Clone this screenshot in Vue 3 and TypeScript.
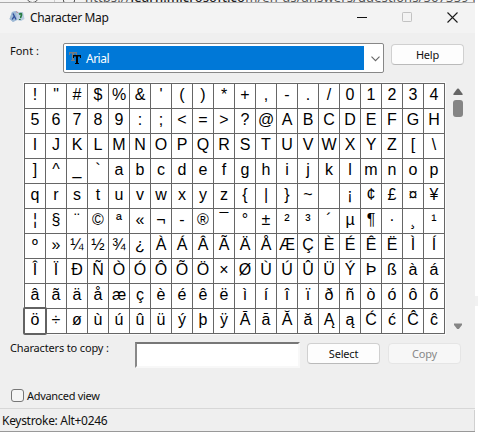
<template>
  <div class="screen">
    <div class="browser-strip">
      <span class="browser-ring"></span>
      <span class="browser-divider"></span>
      <span class="browser-lock"></span>
      <span class="browser-url">https://<b>learn.microsoft.co</b>m/en-us/answers/questions/5673594/</span>
    </div>

    <div class="window">
      <header class="titlebar">
        <svg class="app-icon" width="16" height="14" viewBox="0 0 16 14">
          <path d="M3 2L7 1L10 2L14 2L15.5 9L12 11L8 10L4 12L0.5 9Z" fill="#b9cde0" />
          <path d="M3 2L7 1L8 10L4 12L0.5 9Z" fill="#9eb9d5" />
          <path d="M4 3.5L7 9.5M5.3 6L3.2 9.5" stroke="#304f9b" stroke-width="1.4" fill="none" />
          <path d="M10 4.3Q13 2.5 12.5 5T11 7.5M10.8 9V10" stroke="#287d42" stroke-width="1.7" fill="none" />
          <path d="M7.5 1.5L8.5 3" stroke="#b86f82" />
        </svg>
        <h1 class="title">Character Map</h1>
        <div class="window-controls">
          <svg width="10" height="10" viewBox="0 0 10 10"><path d="M0 5.5H10" stroke="#111" /></svg>
          <svg class="maximize" width="10" height="10" viewBox="0 0 10 10">
            <rect x="0.5" y="0.5" width="9" height="9" rx="0.7" fill="none" stroke="#c2c2c2" />
          </svg>
          <svg width="11" height="11" viewBox="0 0 11 11">
            <path d="M0.5 0.5L10.5 10.5M10.5 0.5L0.5 10.5" stroke="#1a1a1a" stroke-width="1.1" />
          </svg>
        </div>
      </header>

      <div class="font-row">
        <label class="label font-label">Font :</label>
        <div class="combo">
          <div class="combo-value">
            <svg width="13" height="13" viewBox="0 0 13 13">
              <path d="M0 0H8V3H7V1.5H5V8H6V9H2V8H3V1.5H1V3H0Z" fill="#777b80" />
              <path d="M4 3H12V6H11V4.5H9V11H10V12H6V11H7V4.5H5V6H4Z" fill="#050505" />
            </svg>
            <span>Arial</span>
          </div>
          <svg class="chevron" width="9" height="6" viewBox="0 0 9 6">
            <path d="M0.5 0.7L4.5 4.7L8.5 0.7" fill="none" stroke="#666" stroke-width="1.1" />
          </svg>
        </div>
        <button class="button help">Help</button>
      </div>

      <div class="map-row">
        <div class="grid">
          <div
            v-for="(char, index) in characters"
            :key="index"
            :class="['cell', { selected: index === selectedIndex }]"
            @click="selectedIndex = index"
          >{{ char }}</div>
        </div>
        <div class="scrollbar">
          <svg width="10" height="8" viewBox="0 0 10 8"><path d="M4.2 0.8Q5 0 5.8 0.8L9.7 6Q10 7 9 7H1Q0 7 0.3 6Z" fill="#666" /></svg>
          <div class="thumb"></div>
          <svg class="arrow-down" width="8" height="7" viewBox="0 0 8 7"><path d="M0 0.5H8V2L4.8 6H3.2L0 2Z" fill="#858585" /></svg>
        </div>
      </div>

      <div class="copy-row">
        <label class="label copy-label">Characters to copy :</label>
        <input v-model="copyText" class="copy-input" type="text" />
        <button class="button select" @click="selectCharacter">Select</button>
        <button class="button copy" :disabled="!copyText">Copy</button>
      </div>

      <label class="advanced">
        <input v-model="advanced" type="checkbox" />
        <span>Advanced view</span>
      </label>

      <footer class="statusbar"><span>{{ keystroke }}</span></footer>
    </div>
    <div class="outside"><span></span></div>
  </div>
</template>

<script setup lang="ts">
import { computed, ref } from 'vue'

const codes: number[] = []
for (let code = 0x21; code <= 0x109; code++) {
  if (code < 0x7f || code > 0x9f) codes.push(code)
}

// A soft hyphen has no visible glyph of its own
const characters = codes.map((code) => (code === 0xad ? '-' : String.fromCharCode(code)))

const selectedIndex = ref(180)
const copyText = ref('')
const advanced = ref(false)

const keystroke = computed(() => {
  const code = codes[selectedIndex.value]
  return code >= 0xa0 && code <= 0xff ? `Keystroke: Alt+0${code}` : ''
})

const selectCharacter = () => {
  copyText.value += characters[selectedIndex.value]
}
</script>

<style>
body {
  margin: 0;
  background: #fff;
}
</style>

<style scoped>
.screen {
  box-sizing: border-box;
  position: relative;
  display: grid;
  grid-template-columns: 475px 3px;
  grid-template-rows: 3px 429px;
  width: 478px;
  height: 432px;
  overflow: hidden;
  background: #fff;
  color: #111;
  font-family: "Noto Sans", "Open Sans", sans-serif;
  font-size: 11px;
}

.browser-strip {
  position: relative;
  overflow: hidden;
  box-sizing: border-box;
  border-bottom: 1px solid #ababab;
  background: #f3f3f3;
}

.browser-ring,
.browser-lock,
.browser-divider,
.browser-url {
  position: absolute;
}

.browser-ring {
  box-sizing: border-box;
  left: 26px;
  top: -10px;
  width: 13px;
  height: 13px;
  border: 1px solid #555;
  border-radius: 50%;
}

.browser-divider {
  left: 54px;
  width: 1px;
  height: 3px;
  background: #ccc;
}

.browser-lock {
  box-sizing: border-box;
  left: 63px;
  top: -7px;
  width: 12px;
  height: 10px;
  border: 1px solid #555;
  border-radius: 2px;
}

.browser-url {
  left: 85px;
  top: -12px;
  color: #555;
  font-size: 13px;
  line-height: 18px;
  letter-spacing: 0.1px;
  white-space: nowrap;
}

.browser-url b {
  color: #222;
  font-weight: 500;
}

.window {
  display: flex;
  flex-direction: column;
  box-sizing: border-box;
  border-bottom: 1px solid #999;
  background: #efefef;
}

.titlebar {
  display: flex;
  align-items: center;
  box-sizing: border-box;
  flex: 0 0 30px;
  padding: 0 17px 0 9px;
  background: #f3f3f3;
}

.app-icon {
  margin-top: -2px;
}

.title {
  margin: 0 0 0 5px;
  font-size: 12px;
  font-weight: 400;
  line-height: 18px;
  letter-spacing: -0.36px;
}

.window-controls {
  display: flex;
  align-items: center;
  gap: 35px;
  margin: -2px 0 0 auto;
}

.font-row {
  display: flex;
  align-items: flex-start;
  flex: 0 0 49px;
  box-sizing: border-box;
  padding: 10px 11px 0 10px;
}

.label {
  line-height: 16px;
  white-space: nowrap;
}

.font-label {
  width: 53px;
}

.combo {
  display: flex;
  align-items: center;
  box-sizing: border-box;
  width: 321px;
  height: 30px;
  padding: 2px;
  border: 1px solid #888;
  border-radius: 2px;
  background: #fff;
}

.combo-value {
  display: flex;
  align-items: center;
  gap: 4px;
  box-sizing: border-box;
  width: 298px;
  height: 24px;
  padding-left: 3px;
  background: #0078d7;
  color: #fff;
  letter-spacing: -0.5px;
  font-size: 12px;
}

.chevron {
  margin: 2px 0 0 7px;
}

.button {
  box-sizing: border-box;
  height: 21px;
  padding: 0;
  border: 1px solid #d0d0d0;
  border-bottom-color: #bababa;
  border-radius: 4px;
  background: #fdfdfd;
  color: #111;
  font-family: inherit;
  font-size: 11px;
  line-height: 17px;
  letter-spacing: -0.2px;
}

.help {
  width: 73px;
  margin: 1px 0 0 7px;
}

.map-row {
  display: flex;
  flex: 0 0 254px;
  padding-left: 23px;
}

.grid {
  display: grid;
  grid-template-columns: repeat(20, 21px);
  grid-template-rows: repeat(10, 25px);
  align-self: flex-start;
  box-sizing: border-box;
  border-top: 1px solid #666;
  border-left: 1px solid #666;
  outline: 1px solid #fafafa;
  margin: 1px 0 0 1px;
  background: #fff;
}

.cell {
  box-sizing: border-box;
  position: relative;
  border-right: 1px solid #666;
  border-bottom: 1px solid #666;
  color: #000;
  font-family: "Liberation Sans", Arial, sans-serif;
  font-size: 16px;
  line-height: 22px;
  text-align: center;
}

.selected::after {
  content: "";
  position: absolute;
  inset: -2px -2px -2px -2px;
  border: 2px solid #626262;
  border-radius: 2px;
}

.scrollbar {
  display: flex;
  flex-direction: column;
  align-items: center;
  box-sizing: border-box;
  width: 10px;
  height: 248px;
  margin-left: 8px;
  padding-top: 6px;
}

.thumb {
  width: 10px;
  height: 17px;
  margin-top: 4px;
  border-radius: 3px;
  background: #858585;
}

.arrow-down {
  margin-top: auto;
}

.copy-row {
  display: flex;
  align-items: flex-start;
  box-sizing: border-box;
  flex: 0 0 48px;
  padding: 5px 14px 0 10px;
}

.copy-label {
  width: 125px;
  margin-top: -1px;
  letter-spacing: -0.16px;
}

.copy-input {
  box-sizing: border-box;
  width: 165px;
  height: 26px;
  margin: 1px 7px 0 0;
  padding: 2px 4px;
  border: 2px solid #777;
  border-top-color: #777;
  border-left-color: #888;
  border-right-color: #f8f8f8;
  border-bottom-color: #f8f8f8;
  outline: none;
  background: #fff;
  font: 14px "Liberation Sans", Arial, sans-serif;
}

.select,
.copy {
  width: 73px;
  margin-top: 2px;
}

.copy {
  margin-left: 8px;
}

.button:disabled {
  border-color: #e5e5e5;
  background: #f7f7f7;
  color: #888;
}

.advanced {
  display: flex;
  align-items: center;
  flex: 0 0 22px;
  gap: 3px;
  margin-bottom: 2px;
  padding: 0 11px;
  letter-spacing: -0.3px;
}

.advanced input {
  appearance: none;
  box-sizing: border-box;
  width: 13px;
  height: 13px;
  margin: 0;
  border: 1px solid #777;
  border-radius: 3px;
  background: #f5f5f5;
}

.advanced input:checked {
  background: #0078d7;
}

.statusbar {
  display: flex;
  box-sizing: border-box;
  flex: 1;
  padding: 1px 0 0 2px;
  border-top: 1px solid #d7d7d7;
}

.statusbar span {
  flex: 1;
  border-right: 1px solid #d0d0d0;
  font-size: 12px;
  letter-spacing: -0.3px;
  line-height: 21px;
}

.outside {
  grid-column: 2;
  grid-row: 1 / 3;
  background: #fff;
}

.outside span {
  display: block;
  height: 10px;
  margin-top: 296px;
  background: #f1f1f1;
}
</style>
